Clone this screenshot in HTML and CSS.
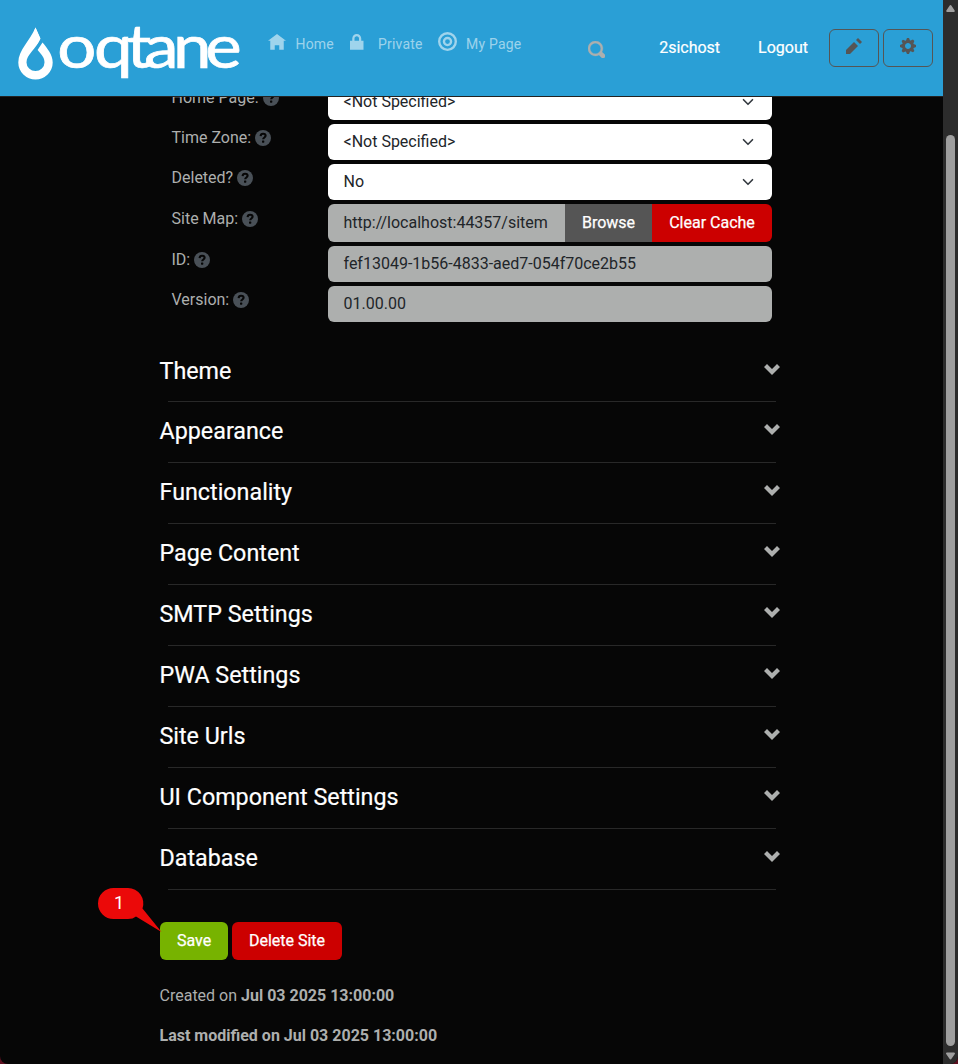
FILE: index.html
```html
<!DOCTYPE html>
<html lang="en">
<head>
<meta charset="utf-8">
<title>Site Settings</title>
<link rel="stylesheet" href="styles.css">
</head>
<body>
<svg class="defs" width="0" height="0">
  <symbol id="help" viewBox="0 0 16 16"><circle cx="8" cy="8" r="8" fill="#495057"/><path d="M5.600 6.100C5.700 4.500 6.700 3.700 8.100 3.700c1.500 0 2.500.9 2.500 2.100 0 1.700-2.400 1.700-2.400 3.500" fill="none" stroke="#060606" stroke-width="2.100"/><rect x="7" y="10.400" width="2.300" height="2.300" rx=".6" fill="#060606"/></symbol>
  <symbol id="caret" viewBox="0 0 16 16"><path d="M2 5l6 6 6-6" fill="none" stroke="#343a40" stroke-width="2.200" stroke-linecap="round" stroke-linejoin="round"/></symbol>
  <symbol id="chevron" viewBox="0 0 8 5.5"><path d="M1.500 0L0 1.500l4 4 4-4L6.500 0 4 2.500z" fill="#adafae"/></symbol>
</svg>
<div class="window">
  <div class="page">
    <header class="topbar">
      <svg class="logo" width="230" height="64" viewBox="0 0 230 64" fill="#fff">
        <path d="M19.500 4.500C14 18 2.500 26.500 2.300 39.500A17.200 17 0 0 0 36.700 39.500C36.700 31.500 31 25 26.500 19.500L21.600 27C26.500 32.500 28.500 35 28.500 39.500A9 8.600 0 0 1 10.500 39.500C10.500 31.500 20 26 24.300 16z"/>
        <path d="M19.500 4.500L24.500 15.500L20.500 22L14 20z"/>
        <text class="wordmark" transform="scale(1.15 1)" x="35.800 67.800 96.200 111.500 136.500 164.500" y="44.500">oqtane</text>
      </svg>
      <nav class="menu">
        <a class="home"><svg width="18" height="18" viewBox="0 0 8 8"><path d="M4 0L0 3h1v4h2V5h2v2h2V2.970L8 3z"/></svg>Home</a>
        <a class="private"><svg width="18" height="18" viewBox="0 0 8 8"><path d="M3 0C1.900 0 1 .9 1 2v1H0v4h6V3H5V2C5 .9 4.100 0 3 0zm0 1c.56 0 1 .44 1 1v1H2V2c0-.56.44-1 1-1z"/></svg>Private</a>
        <a class="mypage"><svg class="target" width="19" height="19" viewBox="0 0 8 8"><g fill="none" stroke="currentColor"><circle cx="4" cy="4" r="3.500"/><circle cx="4" cy="4" r="1.500"/></g></svg>My Page</a>
      </nav>
      <svg class="search" width="17" height="17" viewBox="0 0 8 8"><path d="M3.500 0C1.570 0 0 1.570 0 3.500S1.570 7 3.500 7c.59 0 1.170-.14 1.660-.41a1 1 0 0 0 .13.13l1 1a1.020 1.020 0 1 0 1.440-1.440l-1-1a1 1 0 0 0-.16-.13c.27-.49.44-1.060.44-1.660C7.010 1.570 5.450 0 3.500 0zm0 1C4.890 1 6 2.110 6 3.500c0 .66-.24 1.270-.66 1.720l-.16.16C4.740 5.780 4.140 6 3.500 6 2.110 6 1 4.890 1 3.500S2.110 1 3.500 1z"/></svg>
      <div class="account">
        <a class="user">2sichost</a>
        <a class="logout">Logout</a>
        <button class="tool"><svg width="16" height="16" viewBox="0 0 8 8"><path d="M6 0L5 1l2 2 1-1zM4 2L0 6v2h2l4-4z"/></svg></button>
        <button class="tool"><svg width="16" height="16" viewBox="0 0 8 8"><path d="M3.500 0L3 1.190l-.31.13-1.190-.5-.69.69.5 1.190-.13.31L0 3.500v1l1.190.5.13.31-.5 1.190.69.69 1.190-.5.31.13L3.500 8h1L5 6.810l.31-.13 1.190.5.69-.69-.5-1.190.13-.31L8 4.500v-1L6.810 3l-.13-.31.5-1.190-.69-.69-1.190.5L5 1.190 4.500 0zM4 2.500c.83 0 1.500.67 1.500 1.500S4.830 5.500 4 5.500 2.500 4.830 2.500 4 3.170 2.500 4 2.500z"/></svg></button>
      </div>
    </header>
    <main class="content">
      <div class="form">
        <div class="row"><label>Home Page: <svg class="help"><use href="#help"/></svg></label><div class="field select">&lt;Not Specified&gt;<svg class="caret"><use href="#caret"/></svg></div></div>
        <div class="row"><label>Time Zone: <svg class="help"><use href="#help"/></svg></label><div class="field select">&lt;Not Specified&gt;<svg class="caret"><use href="#caret"/></svg></div></div>
        <div class="row"><label>Deleted? <svg class="help"><use href="#help"/></svg></label><div class="field select">No<svg class="caret"><use href="#caret"/></svg></div></div>
        <div class="row"><label class="lower">Site Map: <svg class="help"><use href="#help"/></svg></label><div class="group"><div class="url">http://localhost:44357/sitem</div><button class="btn browse">Browse</button><button class="btn clear">Clear Cache</button></div></div>
        <div class="row"><label>ID: <svg class="help"><use href="#help"/></svg></label><div class="field disabled">fef13049-1b56-4833-aed7-054f70ce2b55</div></div>
        <div class="row"><label>Version: <svg class="help"><use href="#help"/></svg></label><div class="field disabled">01.00.00</div></div>
      </div>
      <div class="sections">
        <section><h2>Theme</h2><svg class="chevron"><use href="#chevron"/></svg></section>
        <section><h2>Appearance</h2><svg class="chevron"><use href="#chevron"/></svg></section>
        <section><h2>Functionality</h2><svg class="chevron"><use href="#chevron"/></svg></section>
        <section><h2>Page Content</h2><svg class="chevron"><use href="#chevron"/></svg></section>
        <section><h2>SMTP Settings</h2><svg class="chevron"><use href="#chevron"/></svg></section>
        <section><h2>PWA Settings</h2><svg class="chevron"><use href="#chevron"/></svg></section>
        <section><h2>Site Urls</h2><svg class="chevron"><use href="#chevron"/></svg></section>
        <section><h2>UI Component Settings</h2><svg class="chevron"><use href="#chevron"/></svg></section>
        <section><h2>Database</h2><svg class="chevron"><use href="#chevron"/></svg></section>
      </div>
      <div class="actions">
        <button class="btn save">Save</button><button class="btn delete">Delete Site</button>
        <svg class="callout" width="64" height="46" viewBox="0 0 64 46"><path d="M15.500 1h14.500a15.500 15.500 0 0 1 14.500 20.500L63.500 45 38 29.500Q35 32 30 32H15.500a15.500 15.500 0 0 1 0-31z" fill="#eb0909"/><text x="21" y="22" text-anchor="middle" fill="#fff">1</text></svg>
      </div>
      <p>Created on <b>Jul 03 2025 13:00:00</b></p>
      <p><b>Last modified on Jul 03 2025 13:00:00</b></p>
    </main>
  </div>
  <div class="scrollbar">
    <svg width="15" height="14" viewBox="0 0 15 14"><path d="M7.500 6L10.800 11H4.200z"/></svg>
    <div class="thumb"></div>
    <svg width="15" height="18" viewBox="0 0 15 18"><path d="M7.500 12.500L11 7.500H4z"/></svg>
  </div>
</div>
</body>
</html>
```
FILE: styles.css
```css
* { box-sizing: border-box; }
body { margin: 0; background: #5c1020; font: 16px/24px Roboto, sans-serif; color: #adafae; }
.defs { display: block; }
.window { display: flex; width: 958px; height: 1064px; overflow: hidden; border-radius: 0 0 8px 8px; background: #060606; }
.page { flex: 1; display: flex; flex-direction: column; min-width: 0; }
.topbar { height: 97px; flex: none; display: flex; align-items: flex-start; background: #2a9fd6; border-bottom: 1px solid #222; position: relative; z-index: 1; }
.logo { margin: 23px 0 0 16px; flex: none; overflow: visible; }
.wordmark { font: 400 60px Lato, sans-serif; stroke: #fff; stroke-width: .7px; }
.menu { display: flex; margin: 31px 0 0 22px; font-size: 14px; letter-spacing: .2px; line-height: 26px; color: rgba(255,255,255,.55); }
.menu a { display: flex; align-items: flex-start; white-space: nowrap; }
.menu svg { fill: currentColor; margin-top: 3px; }
.menu .target { margin-top: 1px; fill: none; }
.home { width: 82px; gap: 9.5px; }
.private { width: 88px; gap: 10px; }
.mypage { width: 84px; gap: 9px; }
.search { margin: 41px 0 0 66px; fill: #adafae; stroke: #adafae; stroke-width: .15; flex: none; }
.account { display: flex; flex: 1; justify-content: flex-end; align-items: center; margin: 29px 10px 0 0; color: #fff; -webkit-text-stroke: .2px #fff; }
.user { margin-right: 38px; }
.logout { margin-right: 21px; }
.tool { width: 50px; height: 38px; margin: 0; padding: 0 0 4px; border: 1px solid #555; border-radius: 6px; background: none; display: flex; align-items: center; justify-content: center; }
.tool + .tool { margin-left: 4px; }
.tool svg { fill: #555; }
.content { width: 624px; margin: -13px 0 0 160px; }
.form { display: grid; gap: 4px; }
.row { display: flex; padding-left: 11.500px; height: 36px; }
.row:nth-child(4) { height: 38px; }
label { width: 156.500px; flex: none; padding-top: 2px; white-space: nowrap; }
.lower { padding-top: 3px; }
.help { width: 16px; height: 16px; vertical-align: -3px; }
.field { width: 444px; height: 36px; border-radius: 6px; padding: 6px 16px 6px 15.500px; color: #212529; background: #fff; }
.select { display: flex; justify-content: space-between; align-items: center; }
.caret { width: 12px; height: 12px; margin-right: 2px; }
.disabled { background: #adafae; }
.group { width: 444px; height: 38px; display: flex; border-radius: 6px; overflow: hidden; }
.url { flex: 1; min-width: 0; padding: 7px 0 7px 15.500px; background: #adafae; color: #212529; white-space: nowrap; }
.btn { border: 0; padding: 0; height: 38px; font: 400 16px/36px Roboto, sans-serif; color: #fff; background: #c00; flex: none; -webkit-text-stroke: .25px #fff; }
.browse { width: 87px; background: #555; }
.clear { width: 120px; }
.sections { margin-top: 20px; }
section { height: 61px; display: flex; justify-content: space-between; align-items: flex-start; padding: 15px 4.500px 0 0; background: linear-gradient(#282828, #282828) 8px 100% / 608px 1px no-repeat; }
section:first-child { height: 60px; }
h2 { margin: 0 0 0 -.5px; font: 400 23.300px/29px Roboto, sans-serif; color: #fff; -webkit-text-stroke: .2px #fff; }
.chevron { width: 16px; height: 11px; margin-top: 7px; }
.actions { display: flex; gap: 4px; margin-top: 32px; position: relative; }
.actions .btn { border-radius: 6px; }
.save { width: 68px; background: #77b300; }
.delete { width: 110px; }
.callout { position: absolute; left: -62px; top: -35px; font: 18px Roboto, sans-serif; }
p { margin: 16px 0 16px -.5px; }
.actions + p { margin-top: 24px; }
b { font-weight: 700; }
.scrollbar { width: 15px; background: #2c2c2c; display: flex; flex-direction: column; align-items: center; flex: none; }
.scrollbar svg { flex: none; fill: #9f9f9f; stroke: #9f9f9f; stroke-width: 2; stroke-linejoin: round; }
.thumb { width: 9px; height: 911px; margin-top: 121px; border-radius: 5px; background: #9f9f9f; }
```
